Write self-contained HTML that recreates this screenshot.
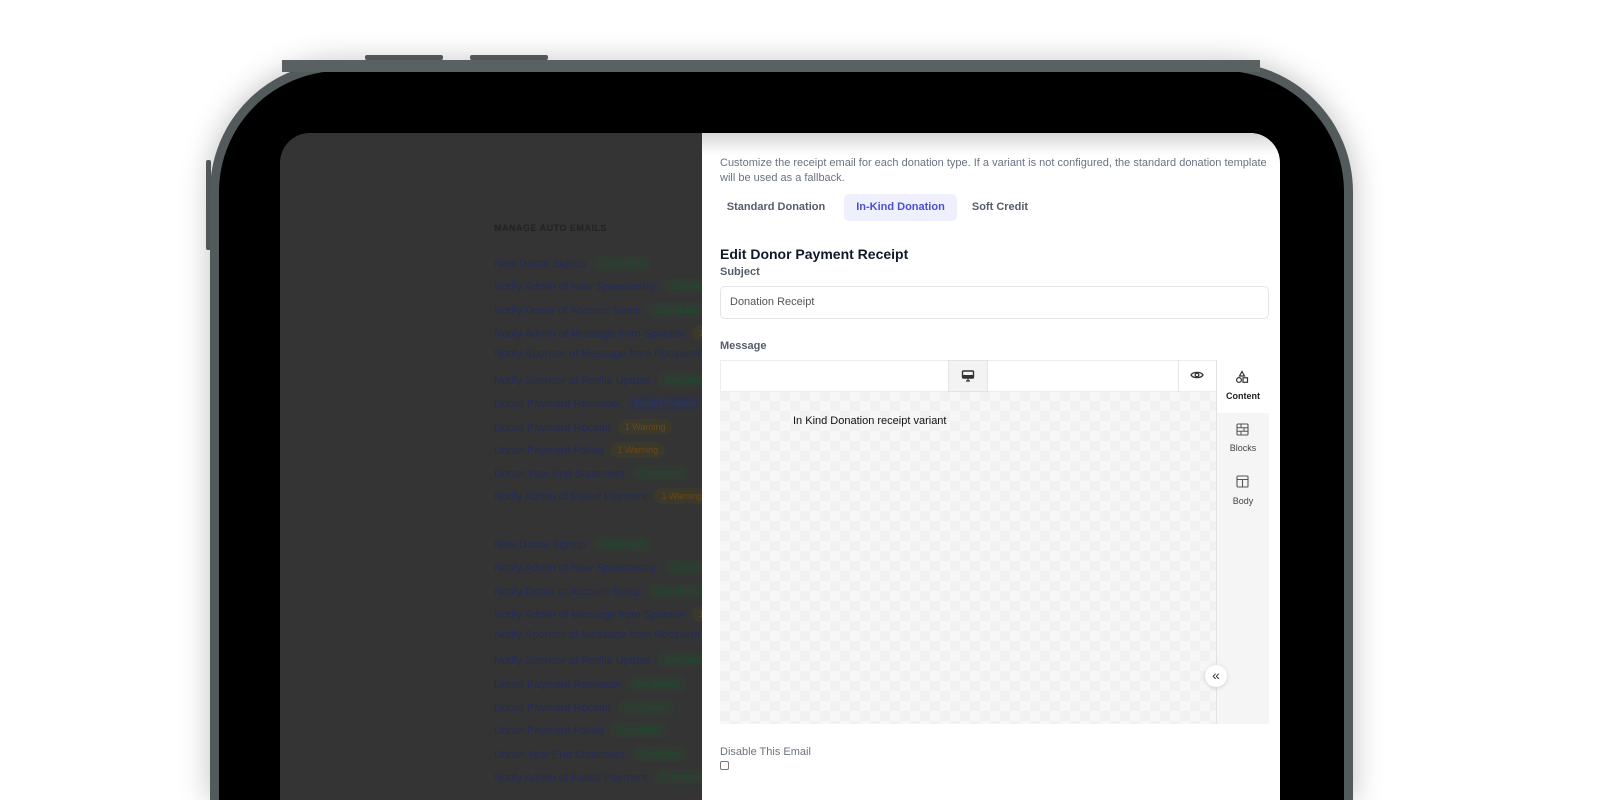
<!DOCTYPE html>
<html><head><meta charset="utf-8"><style>
*{box-sizing:border-box;margin:0;padding:0}
html,body{width:1600px;height:800px;overflow:hidden}
body{background:#fff;position:relative;font-family:"Liberation Sans",sans-serif}
#wrap{position:absolute;left:0;top:0;width:1600px;height:800px;overflow:hidden}
.abs{position:absolute}
.frame{left:210px;top:62px;width:1143px;height:738px;border-radius:130px 130px 0 0;background:#000;border:9px solid #535a5c;border-bottom:0;box-shadow:0 0 30px rgba(0,0,0,.25)}
.screen{left:280px;top:133px;width:1000px;height:667px;border-radius:30px 30px 0 0;overflow:hidden;background:#343434}
.li{position:absolute;left:214px;font-size:11px;color:#232c56;white-space:nowrap}
.b{display:inline-block;font-size:9px;padding:3px 7px;border-radius:9px;margin-left:7px;vertical-align:1px}
.g{background:#303a33;color:#1f4a2e}.o{background:#3b382c;color:#6a4818}.bl{background:#30333f;color:#233676}
.panel{left:422px;top:0;width:578px;height:667px;background:#fff}
</style></head><body><div id="wrap">
<div class="abs" style="left:365px;top:55px;width:78px;height:5px;background:#5b6163;border-radius:2px"></div>
<div class="abs" style="left:470px;top:55px;width:78px;height:5px;background:#5b6163;border-radius:2px"></div>
<div class="abs" style="left:206px;top:160px;width:5px;height:90px;background:#5b6163;border-radius:2px"></div>
<div class="abs frame"></div>
<div class="abs" style="left:282px;top:60px;width:978px;height:12px;background:#5a6163"></div>
<div class="abs screen">
 <div class="abs" style="left:214px;top:90px;font-size:9px;font-weight:bold;color:#222;letter-spacing:.5px">MANAGE AUTO EMAILS</div>
 <div class="li" style="top:122px">New Donor Signup<span class="b g">Completed</span></div>
 <div class="li" style="top:145px">Notify Admin of New Sponsorship<span class="b g">Completed</span></div>
 <div class="li" style="top:169px">Notify Donor of Account Setup<span class="b g">Completed</span></div>
 <div class="li" style="top:192px">Notify Admin of Message from Sponsor<span class="b o">1 Warning</span></div>
 <div class="li" style="top:215px">Notify Sponsor of Message from Recipient</div>
 <div class="li" style="top:239px">Notify Sponsor of Profile Update<span class="b g">Completed</span></div>
 <div class="li" style="top:262px">Donor Payment Reminder<span class="b bl">Email Disabled</span></div>
 <div class="li" style="top:286px">Donor Payment Receipt<span class="b o">1 Warning</span></div>
 <div class="li" style="top:309px">Donor Payment Failed<span class="b o">1 Warning</span></div>
 <div class="li" style="top:332px">Donor Year End Statement<span class="b g">Completed</span></div>
 <div class="li" style="top:355px">Notify Admin of Failed Payment<span class="b o">1 Warning</span></div>
 <div class="li" style="top:403px">New Donor Signup<span class="b g">Completed</span></div>
 <div class="li" style="top:426px">Notify Admin of New Sponsorship<span class="b g">Completed</span></div>
 <div class="li" style="top:450px">Notify Donor of Account Setup<span class="b g">Completed</span></div>
 <div class="li" style="top:473px">Notify Admin of Message from Sponsor<span class="b o">1 Warning</span></div>
 <div class="li" style="top:496px">Notify Sponsor of Message from Recipient</div>
 <div class="li" style="top:519px">Notify Sponsor of Profile Update<span class="b g">Completed</span></div>
 <div class="li" style="top:543px">Donor Payment Reminder<span class="b g">Completed</span></div>
 <div class="li" style="top:566px">Donor Payment Receipt<span class="b g">Completed</span></div>
 <div class="li" style="top:589px">Donor Payment Failed<span class="b g">Completed</span></div>
 <div class="li" style="top:613px">Donor Year End Statement<span class="b g">Completed</span></div>
 <div class="li" style="top:636px">Notify Admin of Failed Payment<span class="b g">Completed</span></div>
 <div class="abs panel">
  <div class="abs" style="left:0;top:0;width:578px;height:22px;background:linear-gradient(#d8d8d8,#fff)"></div>
  <div class="abs" style="left:18px;top:23px;width:560px;font-size:11px;line-height:15px;color:#6b7280">Customize the receipt email for each donation type. If a variant is not configured, the standard donation template will be used as a fallback.</div>
  <div class="abs" style="left:18px;top:61px;width:112px;height:27px;font-size:11px;font-weight:bold;color:#555d6b;text-align:center;line-height:27px">Standard Donation</div>
  <div class="abs" style="left:142px;top:61px;width:113px;height:27px;font-size:11px;font-weight:bold;color:#4b4fd6;background:#eef0fd;border-radius:5px;text-align:center;line-height:27px">In-Kind Donation</div>
  <div class="abs" style="left:262px;top:61px;width:72px;height:27px;font-size:11px;font-weight:bold;color:#555d6b;text-align:center;line-height:27px">Soft Credit</div>
  <div class="abs" style="left:18px;top:113px;font-size:14px;font-weight:bold;color:#111827">Edit Donor Payment Receipt</div>
  <div class="abs" style="left:18px;top:133px;font-size:11px;font-weight:bold;color:#555d6b">Subject</div>
  <div class="abs" style="left:18px;top:153px;width:549px;height:33px;border:1px solid #e2e4e8;border-radius:5px;font-size:11px;color:#555;padding-left:9px;line-height:31px">Donation Receipt</div>
  <div class="abs" style="left:18px;top:207px;font-size:11px;font-weight:bold;color:#555d6b">Message</div>
  <div class="abs" style="left:18px;top:227px;width:497px;height:364px;border-top:1px solid #ececec;background-color:#f7f7f7;background-image:linear-gradient(45deg,#f1f1f1 25%,transparent 25%,transparent 75%,#f1f1f1 75%),linear-gradient(45deg,#f1f1f1 25%,transparent 25%,transparent 75%,#f1f1f1 75%);background-size:20px 20px;background-position:0 0,10px 10px"></div>
  <div class="abs" style="left:18px;top:227px;width:497px;height:32px;background:#fff;border:1px solid #ececec"></div>
  <div class="abs" style="left:246px;top:227px;width:40px;height:32px;background:#f3f3f3;border:1px solid #e4e4e4"></div>
  <svg class="abs" style="left:259px;top:237px" width="14" height="12" viewBox="0 0 14 12"><rect x="1.5" y="1" width="11" height="7" rx="1" fill="none" stroke="#333" stroke-width="1.4"/><rect x="1.5" y="5" width="11" height="3" fill="#333"/><path d="M5 11h4M7 8v3" stroke="#333" stroke-width="1.3"/></svg>
  <div class="abs" style="left:476px;top:227px;width:1px;height:32px;background:#e4e4e4"></div>
  <svg class="abs" style="left:488px;top:236px" width="14" height="12" viewBox="0 0 14 12"><path d="M1 6C3 2.5 11 2.5 13 6 11 9.5 3 9.5 1 6Z" fill="none" stroke="#333" stroke-width="1.3"/><circle cx="7" cy="6" r="1.8" fill="none" stroke="#333" stroke-width="1.3"/></svg>
  <div class="abs" style="left:91px;top:282px;font-size:11px;color:#111">In Kind Donation receipt variant</div>
  <div class="abs" style="left:514px;top:227px;width:53px;height:364px;background:#f5f5f5;border-left:1px solid #e2e2e2"></div>
  <div class="abs" style="left:515px;top:227px;width:52px;height:53px;background:#fff"></div>
  <svg class="abs" style="left:533px;top:237px" width="14" height="14" viewBox="0 0 14 14"><path d="M7 1.5L9.5 6h-5Z" fill="none" stroke="#333" stroke-width="1.2"/><circle cx="4" cy="10" r="2.4" fill="none" stroke="#333" stroke-width="1.2"/><rect x="8" y="7.8" width="4.5" height="4.5" fill="none" stroke="#333" stroke-width="1.2"/></svg>
  <div class="abs" style="left:515px;top:258px;width:52px;text-align:center;font-size:9px;font-weight:bold;color:#222">Content</div>
  <svg class="abs" style="left:534px;top:290px" width="13" height="13" viewBox="0 0 13 13"><rect x="1" y="1" width="11" height="11" rx="1" fill="none" stroke="#555" stroke-width="1.1"/><path d="M1 4.7h11M1 8.3h11M5 1v3.7M8 4.7v3.6M5 8.3V12" stroke="#555" stroke-width="1"/></svg>
  <div class="abs" style="left:515px;top:310px;width:52px;text-align:center;font-size:9px;color:#444">Blocks</div>
  <svg class="abs" style="left:534px;top:342px" width="13" height="13" viewBox="0 0 13 13"><rect x="1" y="1" width="11" height="11" rx="1" fill="none" stroke="#555" stroke-width="1.1"/><path d="M1 4.5h11M6.5 4.5V12" stroke="#555" stroke-width="1.1"/></svg>
  <div class="abs" style="left:515px;top:363px;width:52px;text-align:center;font-size:9px;color:#444">Body</div>
  <div class="abs" style="left:503px;top:532px;width:22px;height:22px;border-radius:50%;background:#fff;box-shadow:0 1px 4px rgba(0,0,0,.15);font-size:14px;color:#333;text-align:center;line-height:20px">«</div>
  <div class="abs" style="left:18px;top:613px;font-size:11px;color:#6b7280">Disable This Email</div>
  <div class="abs" style="left:18px;top:628px;width:9px;height:9px;border:1px solid #777;border-radius:2px"></div>
 </div>
</div>
</div></body></html>
